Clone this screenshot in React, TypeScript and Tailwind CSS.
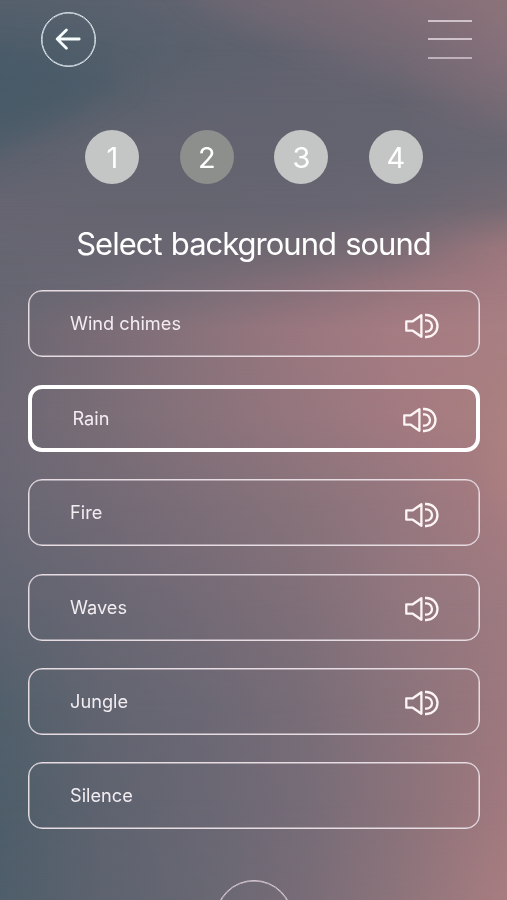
import React from "react";

const COLUMNS = [0, 100, 200, 300, 400, 507];

// Colour rows of the backdrop, blended into each other from top to bottom.
const ROWS: { y: number; colors: string[] }[] = [
  { y: 0, colors: ["#55606c", "#59616e", "#626470", "#6f6873", "#806d77", "#8e747a"] },
  { y: 50, colors: ["#4d5d6a", "#525f6b", "#5a616d", "#62636f", "#6e6873", "#86707a"] },
  { y: 100, colors: ["#4e5e6a", "#58616c", "#60636f", "#62636f", "#64646f", "#746a74"] },
  { y: 150, colors: ["#5b626e", "#636470", "#646470", "#646470", "#646470", "#676671"] },
  { y: 205, colors: ["#666571", "#656570", "#656570", "#666571", "#696671", "#746a73"] },
  { y: 250, colors: ["#666671", "#686671", "#6b6772", "#716972", "#7d6d76", "#9c777d"] },
  { y: 285, colors: ["#656671", "#6b6873", "#776c76", "#856f78", "#96757d", "#a37b80"] },
  { y: 330, colors: ["#696772", "#7a6c76", "#8a737b", "#9a777f", "#a57c82", "#a87f82"] },
  { y: 420, colors: ["#6c6874", "#796d76", "#88727a", "#95767e", "#a27a80", "#ab8080"] },
  { y: 500, colors: ["#686773", "#726a75", "#7d6e78", "#88737a", "#96777f", "#a77c80"] },
  { y: 600, colors: ["#5f6470", "#696773", "#746b76", "#806f78", "#91767e", "#9d7a80"] },
  { y: 700, colors: ["#52606c", "#626570", "#6b6874", "#786d77", "#8a737b", "#9d787e"] },
  { y: 800, colors: ["#4e5e6a", "#5e636f", "#696773", "#756c77", "#8a727a", "#a0797e"] },
  { y: 900, colors: ["#4e5e6a", "#5d636f", "#676772", "#776c77", "#8d747b", "#a87d80"] },
];

function Backdrop() {
  return (
    <svg className="absolute inset-0 -z-10" width="507" height="900" viewBox="0 0 507 900" aria-hidden="true">
      <defs>
        <linearGradient id="fade" x1="0" y1="0" x2="0" y2="1">
          <stop offset="0" stopColor="#fff" stopOpacity="0" />
          <stop offset="1" stopColor="#fff" stopOpacity="1" />
        </linearGradient>
        <mask id="fadeMask" maskContentUnits="objectBoundingBox" style={{ maskType: "alpha" }}>
          <rect width="1" height="1" fill="url(#fade)" />
        </mask>
        {ROWS.map((row) => (
          <linearGradient key={row.y} id={`row${row.y}`} gradientUnits="userSpaceOnUse" x1="0" y1="0" x2="507" y2="0">
            {row.colors.map((color, i) => (
              <stop key={i} offset={COLUMNS[i] / 507} stopColor={color} />
            ))}
          </linearGradient>
        ))}
        <filter id="soft" x="-50%" y="-50%" width="200%" height="200%" colorInterpolationFilters="sRGB">
          <feGaussianBlur stdDeviation="12" />
        </filter>
      </defs>
      {ROWS.slice(0, -1).map((row, i) => {
        const next = ROWS[i + 1];
        const height = next.y - row.y;
        return (
          <g key={row.y}>
            <rect y={row.y} width="507" height={height} fill={`url(#row${row.y})`} />
            <rect y={row.y} width="507" height={height} fill={`url(#row${next.y})`} mask="url(#fadeMask)" />
          </g>
        );
      })}
      <g filter="url(#soft)">
        <path d="M-40 50 L60 60 L130 78 L60 120 L-40 168Z" fill="#435866" opacity="0.5" />
        <path d="M170 -30 L200 5 L300 45 L410 82 L540 132 L540 -30Z" fill="#87707a" opacity="0.22" />
        <path d="M540 215 L470 236 L390 275 L540 275Z" fill="#a3797e" opacity="0.15" />
        <path d="M540 350 L485 455 L495 505 L540 540Z" fill="#b38380" opacity="0.3" />
      </g>
    </svg>
  );
}

function SpeakerIcon() {
  return (
    <svg className="mt-1 shrink-0 overflow-visible" width="34" height="26" viewBox="0 0 34 26" fill="none" stroke="#fdf5f5" strokeWidth="2.3" strokeLinejoin="round" aria-hidden="true">
      <path d="M2.3 8.3H8.8L17.4 2.2V23.8L8.8 17.7H2.3Z" />
      <path d="M21 7.4H22.4A5.6 5.6 0 0 1 22.4 18.6H21" />
      <path d="M21 2H22.5A11 11 0 0 1 22.5 24H21" />
    </svg>
  );
}

const STEPS = [1, 2, 3, 4];
const CURRENT_STEP = 2;

const SOUNDS = [
  { name: "Wind chimes", audible: true },
  { name: "Rain", audible: true },
  { name: "Fire", audible: true },
  { name: "Waves", audible: true },
  { name: "Jungle", audible: true },
  { name: "Silence", audible: false },
];
const SELECTED = "Rain";

export default function App() {
  return (
    <main className="relative isolate flex h-[900px] w-[507px] flex-col overflow-hidden font-['Inter','Liberation_Sans',sans-serif] text-white">
      <Backdrop />

      <header className="flex items-start justify-between pt-3 pr-[35.5px] pl-[41px]">
        <button aria-label="Back" className="flex size-[55px] items-center justify-center rounded-full border border-[#dce6ed] shadow-[inset_0_0_0_0.5px_#dce6ed]">
          <svg className="mr-[2px] mb-[2px]" width="26" height="22" viewBox="0 0 26 22" fill="none" stroke="#f6fbfd" strokeWidth="2.8" strokeLinecap="round" strokeLinejoin="round" aria-hidden="true">
            <path d="M24.2 11H2.2M11.4 2L2.2 11L11.4 20.2" />
          </svg>
        </button>
        <button aria-label="Menu" className="mt-[8px] flex w-[43.5px] flex-col gap-[16.4px]">
          <span className="h-[2px] bg-[#d0c2ca]" />
          <span className="h-[2px] bg-[#d0c2ca]" />
          <span className="h-[2px] bg-[#beb1bb]" />
        </button>
      </header>

      <ol className="mt-[63px] flex justify-center gap-[40.5px] pl-[1.4px]">
        {STEPS.map((step) => (
          <li
            key={step}
            className={`flex size-[54px] items-center justify-center rounded-full text-[29px] leading-none ${
              step === CURRENT_STEP ? "bg-[#8d8f8d]" : "bg-[#c4c5c5]"
            }`}
          >
            {step}
          </li>
        ))}
      </ol>

      <h1 className="mt-10 text-center text-[31px] leading-10 font-normal tracking-[-1px] [word-spacing:1.5px]">Select background sound</h1>

      <ul className="mt-[26.4px] flex flex-col gap-[27.4px] pr-[27px] pl-7">
        {SOUNDS.map(({ name, audible }) => (
          <li
            key={name}
            className={`flex h-[67px] items-center justify-between rounded-[14px] ${
              name === SELECTED
                ? "border-4 border-white pr-10 pl-[40.5px]"
                : "border border-[#e6dce2] px-[41px] shadow-[inset_0_0_0_0.5px_#e6dce2]"
            }`}
          >
            <span className="pb-px text-[18.2px] leading-6 text-[#f3edf2]">{name}</span>
            {audible && <SpeakerIcon />}
          </li>
        ))}
      </ul>

      <div className="mt-[51px] size-[78px] shrink-0 self-center rounded-full border border-[#d9ccd4] shadow-[inset_0_0_0_0.5px_#d9ccd4]" />
    </main>
  );
}
